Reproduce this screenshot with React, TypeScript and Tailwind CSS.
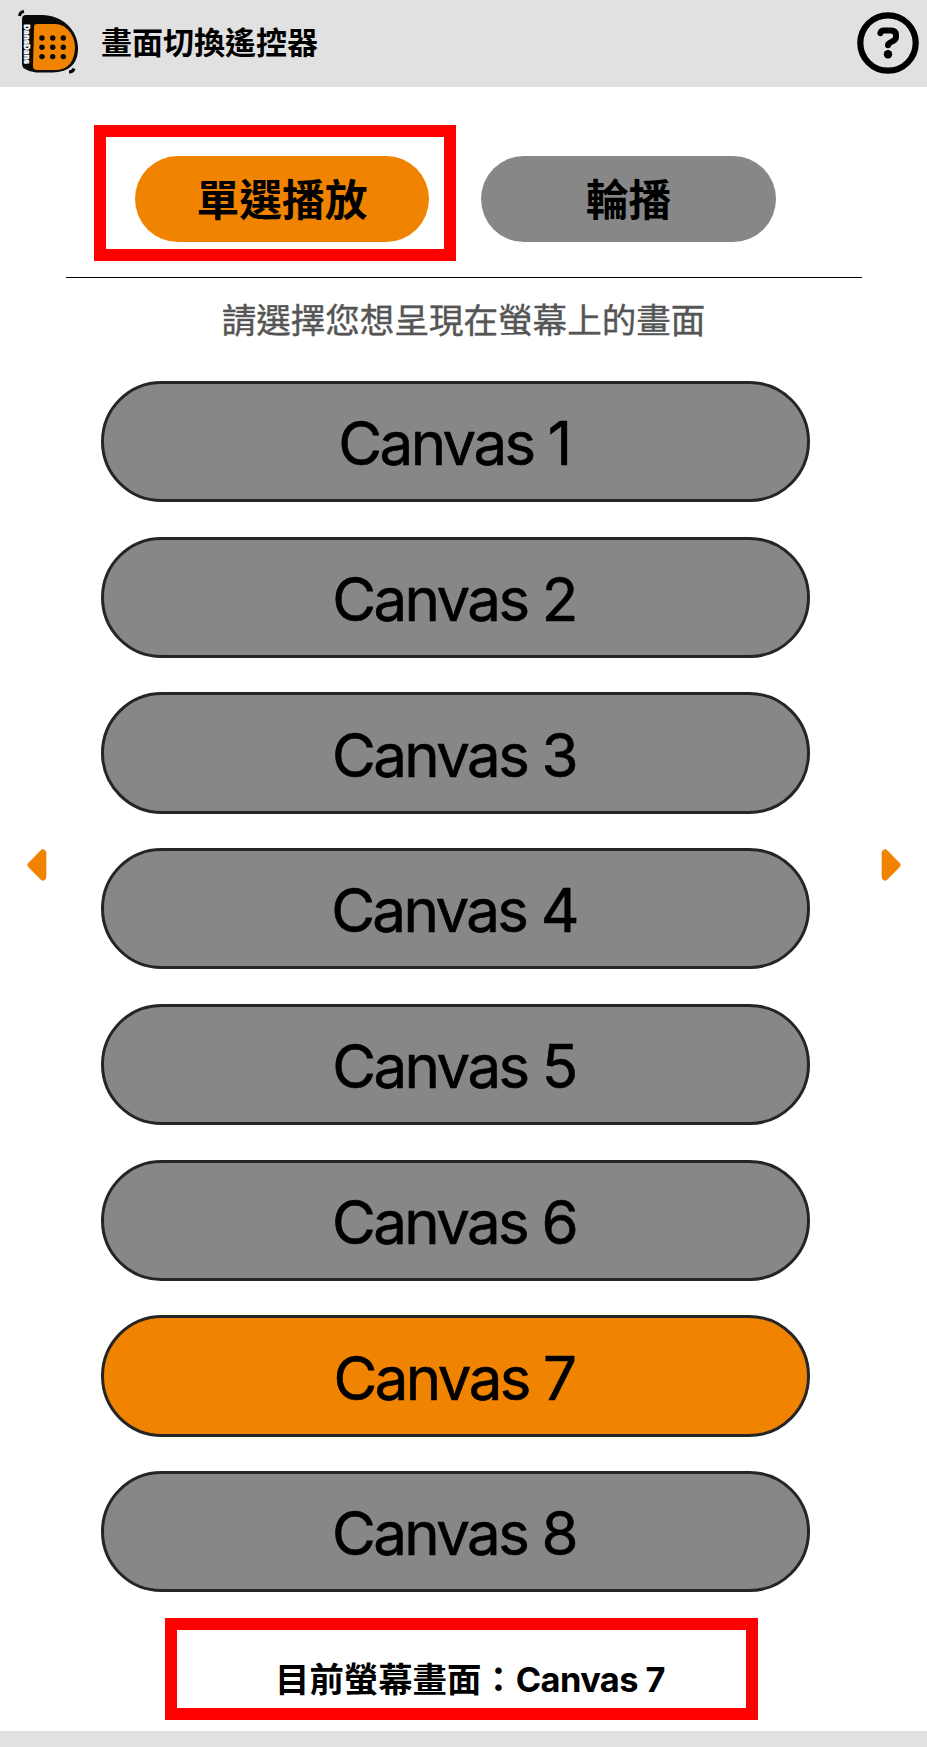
interface CanvasButtonProps {
  name: string;
  active: boolean;
}

const canvases = [1, 2, 3, 4, 5, 6, 7, 8];
const current = 7;

const Logo = () => (
  <svg width="64" height="68" viewBox="0 0 64 68" fill="none">
    <path
      d="M6 9Q6 5 10 5H26C46 5 62 20 62 38C62 56 51 62 37 62.500H20Q14 62 9 59Q6 58 6 53Z"
      fill="#080a0b"
    />
    <path
      d="M18 17Q18 14 21 14H39C51 14 59 26 59 37C59 51 52 59 42 60H21Q17 60 17 56Z"
      fill="#f08300"
    />
    <path d="M3.500 6Q4 2 8 1.500" stroke="#080a0b" strokeWidth="3" />
    <path d="M53 62Q57 62 58 58.500" stroke="#080a0b" strokeWidth="3" />
    {[28, 37.3, 46.600].map((y) =>
      [26, 36.700, 47.300].map((x) => (
        <circle key={`${x}-${y}`} cx={x} cy={y} r="2.700" fill="#080a0b" />
      ))
    )}
    <text
      transform="translate(8 14.500) rotate(90)"
      fontFamily="Inter, sans-serif"
      fontSize="8"
      fontWeight="900"
      textLength="39.500"
      lengthAdjust="spacingAndGlyphs"
      fill="#fff"
      stroke="#fff"
      strokeWidth="0.300"
    >
      DansDans
    </text>
  </svg>
);

const HelpIcon = () => (
  <svg width="62" height="62" viewBox="0 0 62 62" fill="none" stroke="#000">
    <circle cx="31" cy="31" r="27.700" strokeWidth="6.200" />
    <path
      d="M23.400 21.200Q24 18.500 27 18.500H34Q39 18.500 39 23V25Q39 27.500 36 29L32.500 31Q31 32 31 33.200"
      strokeWidth="6"
      strokeLinecap="round"
      strokeLinejoin="round"
    />
    <circle cx="31" cy="42.300" r="4.200" fill="#000" stroke="none" />
  </svg>
);

const Arrow = ({ className }: { className: string }) => (
  <button className={className}>
    <svg width="20" height="32" viewBox="0 0 20 32" fill="#f08300">
      <path d="M13.500 1.400Q15 0 17 0.500Q19.300 1 19.300 4V28Q19.300 31 17 31.500Q15 32 13.500 30.600L1.200 18Q-0.500 16 1.200 14Z" />
    </svg>
  </button>
);

const CanvasButton = ({ name, active }: CanvasButtonProps) => (
  <button
    className={`flex h-[121.250px] w-full items-center justify-center rounded-full border-3 border-[#252525] pt-[3px] pr-[3px] font-[Inter,sans-serif] text-[60px] leading-none tracking-[-2.600px] [-webkit-text-stroke:0.600px_black] ${
      active ? "bg-[#f08300]" : "bg-[#878787]"
    }`}
  >
    {name}
  </button>
);

export default function App() {
  return (
    <div
      lang="zh-Hant"
      className="flex h-[1747px] w-[927px] flex-col overflow-hidden bg-white font-['Noto_Sans_CJK_TC',sans-serif] text-black"
    >
      <header className="flex h-[87px] shrink-0 items-center justify-between bg-[#e1e1e1] pr-2 pl-4">
        <div className="flex items-center gap-[21px]">
          <Logo />
          <h1 className="pb-[6px] text-[31px] leading-none font-bold">畫面切換遙控器</h1>
        </div>
        <button className="pb-px">
          <HelpIcon />
        </button>
      </header>

      <main className="flex grow flex-col">
        <div className="flex gap-[25px] pt-[38px] pl-[94px]">
          <div className="h-[136px] w-[362px] border-12 border-[#ff0000] pt-[19px] pl-[29px]">
            <button className="h-[86px] w-[294px] rounded-full bg-[#f08300] pb-[3px] text-[42.800px] leading-none font-bold">
              單選播放
            </button>
          </div>
          <button className="mt-[31px] h-[86px] w-[295px] rounded-full bg-[#878787] pb-[3px] text-[42.800px] leading-none font-bold">
            輪播
          </button>
        </div>

        <hr className="mt-4 mr-[65px] ml-[66px] border-t border-black" />
        <p className="mt-5 h-10 text-center text-[34.560px] leading-10 text-[#555] [-webkit-text-stroke:0.400px_#555]">
          請選擇您想呈現在螢幕上的畫面
        </p>

        <div className="mt-[42.900px] flex">
          <Arrow className="mt-[468px] ml-[27px] h-8 w-[74px] shrink-0" />
          <div className="flex w-[709px] flex-col gap-[34.500px]">
            {canvases.map((n) => (
              <CanvasButton key={n} name={`Canvas ${n}`} active={n === current} />
            ))}
          </div>
          <Arrow className="mt-[468px] mr-[26px] ml-auto h-8 rotate-180" />
        </div>

        <div className="mt-[25.700px] ml-[165px] flex h-[102px] w-[593px] items-center border-12 border-[#ff0000] pt-5 pl-[98px] text-[34.400px] leading-none font-bold">
          <span className="pb-[3px]">目前螢幕畫面：</span>
          <span className="pt-[3px] font-[Inter,sans-serif] tracking-[-0.600px]">
            Canvas {current}
          </span>
        </div>
      </main>

      <footer className="h-4 shrink-0 bg-[#e1e1e1]" />
    </div>
  );
}
